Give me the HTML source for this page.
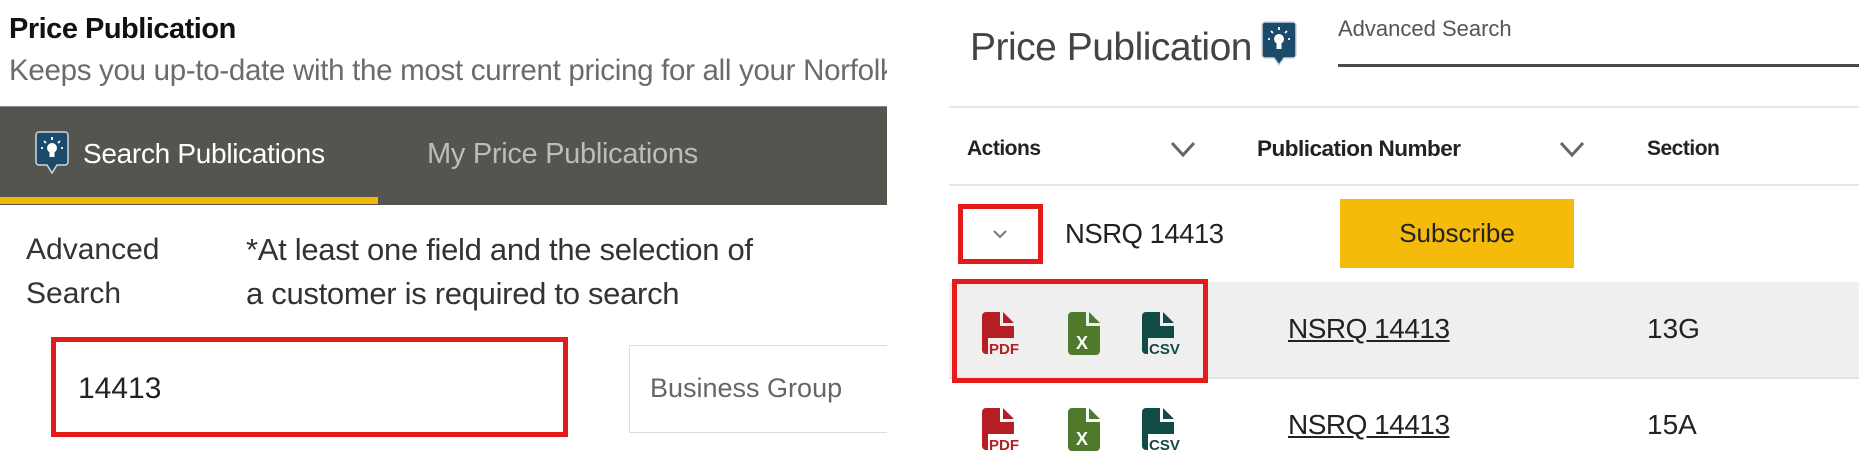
<!DOCTYPE html>
<html><head><meta charset="utf-8"><style>
*{margin:0;padding:0;box-sizing:border-box}
body{width:1859px;height:470px;overflow:hidden;background:#fff;font-family:"Liberation Sans",sans-serif;position:relative;color:#222}
.a{position:absolute;white-space:nowrap}
.ico{position:absolute}
</style></head><body>
<!-- LEFT -->
<div class="a" style="left:9px;top:13px;font-size:29px;font-weight:bold;color:#111;letter-spacing:-0.5px">Price Publication</div>
<div class="a" style="left:9px;top:54px;font-size:29.5px;color:#6b6b6b;width:878px;overflow:hidden;letter-spacing:-0.3px">Keeps you up-to-date with the most current pricing for all your Norfolk</div>
<div class="a" style="left:0;top:106px;width:887px;height:99px;background:#55554f;border-top:1px solid #888"></div>
<div class="a" style="left:0;top:197px;width:378px;height:7px;background:#f2b705"></div>
<svg class="ico" style="left:35px;top:131px" width="34" height="48" viewBox="0 0 34 48">
<path d="M4 1h26a3 3 0 0 1 3 3v27a3 3 0 0 1-3 3h-8l-5 8-5-8h-8a3 3 0 0 1-3-3v-27a3 3 0 0 1 3-3z" fill="#1b4a6b" stroke="#cfd8de" stroke-width="1.5"/>
<circle cx="17" cy="17" r="5" fill="#fff"/><rect x="14.5" y="21" width="5" height="5" fill="#fff"/>
<path d="M17 6v3M9 10l2 2M25 10l-2 2M6 17h2M26 17h2" stroke="#fff" stroke-width="1.8"/>
</svg>
<div class="a" style="left:83px;top:138px;font-size:28px;color:#fff;letter-spacing:-0.3px">Search Publications</div>
<div class="a" style="left:427px;top:138px;font-size:29px;color:#bdbdb8;letter-spacing:-0.3px">My Price Publications</div>
<div class="a" style="left:26px;top:228px;font-size:30px;color:#333;line-height:44px">Advanced<br>Search</div>
<div class="a" style="left:246px;top:228px;font-size:31px;color:#333;line-height:44px;letter-spacing:-0.3px">*At least one field and the selection of<br>a customer is required to search</div>
<div class="a" style="left:51px;top:337px;width:517px;height:100px;border:5px solid #e31b1b"></div>
<div class="a" style="left:78px;top:372px;font-size:30px;color:#222">14413</div>
<div class="a" style="left:629px;top:345px;width:258px;height:88px;border:1.5px solid #ddd;border-right:none"></div>
<div class="a" style="left:650px;top:373px;font-size:27px;color:#666">Business Group</div>

<!-- RIGHT -->
<div class="a" style="left:970px;top:26px;font-size:39px;color:#444;letter-spacing:-0.5px">Price Publication</div>
<svg class="ico" style="left:1261px;top:21px" width="36" height="48" viewBox="0 0 36 48">
<path d="M4 1h28a3 3 0 0 1 3 3v30a3 3 0 0 1-3 3h-9l-5 7-5-7h-9a3 3 0 0 1-3-3v-30a3 3 0 0 1 3-3z" fill="#1b4a6b" stroke="#cfd8de" stroke-width="1.5"/>
<circle cx="18" cy="18" r="5" fill="#fff"/><rect x="15.5" y="22" width="5" height="6" fill="#fff"/>
<path d="M18 6v3M10 10l2 2M26 10l-2 2M7 18h2M27 18h2" stroke="#fff" stroke-width="1.8"/>
</svg>
<div class="a" style="left:1338px;top:16px;font-size:22px;color:#555">Advanced Search</div>
<div class="a" style="left:1338px;top:64px;width:521px;height:3px;background:#4a4a48"></div>
<div class="a" style="left:949px;top:106px;width:910px;height:2px;background:#e6e6e6"></div>
<div class="a" style="left:967px;top:137px;font-size:21px;font-weight:bold;color:#222;letter-spacing:-0.5px">Actions</div>
<svg class="ico" style="left:1170px;top:140px" width="26" height="18"><path d="M2 3l11 12 11-12" stroke="#666" stroke-width="3" fill="none"/></svg>
<div class="a" style="left:1257px;top:136px;font-size:22.5px;font-weight:bold;color:#222;letter-spacing:-0.5px">Publication Number</div>
<svg class="ico" style="left:1559px;top:140px" width="26" height="18"><path d="M2 3l11 12 11-12" stroke="#666" stroke-width="3" fill="none"/></svg>
<div class="a" style="left:1647px;top:137px;font-size:21px;font-weight:bold;color:#222;letter-spacing:-0.5px">Section</div>
<div class="a" style="left:949px;top:184px;width:910px;height:2px;background:#e6e6e6"></div>

<div class="a" style="left:958px;top:204px;width:85px;height:60px;border:5px solid #e31b1b"></div>
<svg class="ico" style="left:992px;top:229px" width="16" height="10"><path d="M2 2l6 6 6-6" stroke="#777" stroke-width="2" fill="none"/></svg>
<div class="a" style="left:1065px;top:218px;font-size:27.5px;color:#222;letter-spacing:-0.5px">NSRQ 14413</div>
<div class="a" style="left:1340px;top:199px;width:234px;height:69px;background:#f5bb0a;font-size:26px;color:#222;text-align:center;line-height:69px">Subscribe</div>

<div class="a" style="left:949px;top:282px;width:910px;height:96px;background:#efefef"></div>
<div class="a" style="left:949px;top:377px;width:910px;height:2px;background:#e3e3e3"></div>
<div class="a" style="left:952px;top:279px;width:256px;height:104px;border:5px solid #e31b1b"></div>

<div class="a" style="left:1288px;top:313px;font-size:28px;color:#222;text-decoration:underline;letter-spacing:-0.5px">NSRQ 14413</div>
<div class="a" style="left:1647px;top:313px;font-size:28px;color:#222">13G</div>
<div class="a" style="left:1288px;top:409px;font-size:28px;color:#222;text-decoration:underline;letter-spacing:-0.5px">NSRQ 14413</div>
<div class="a" style="left:1647px;top:409px;font-size:28px;color:#222">15A</div>

<!-- icon rows -->
<svg class="ico" style="left:980px;top:311px" width="240" height="45" viewBox="0 0 240 45">
<g><path d="M6 1h14v14h14v28h-28a4 4 0 0 1-4-4v-34a4 4 0 0 1 4-4z" fill="#b51f24"/><path d="M23 1l11 11h-11z" fill="#b51f24"/><rect x="8" y="27" width="40" height="18" fill="#efefef"/><text x="9" y="43" font-family="Liberation Sans" font-weight="bold" font-size="15" fill="#b51f24">PDF</text></g>
<g transform="translate(86,0)"><path d="M6 1h14v14h14v25a4 4 0 0 1-4 4h-24a4 4 0 0 1-4-4v-35a4 4 0 0 1 4-4z" fill="#4f7a2c"/><path d="M23 1l11 11h-11z" fill="#4f7a2c"/><text x="10" y="38" font-family="Liberation Sans" font-weight="bold" font-size="18" fill="#fff">X</text></g>
<g transform="translate(160,0)"><path d="M6 1h14v14h14v28h-28a4 4 0 0 1-4-4v-34a4 4 0 0 1 4-4z" fill="#124a45"/><path d="M23 1l11 11h-11z" fill="#124a45"/><rect x="8" y="27" width="40" height="18" fill="#efefef"/><text x="9" y="43" font-family="Liberation Sans" font-weight="bold" font-size="15" fill="#124a45">CSV</text></g>
</svg>
<svg class="ico" style="left:980px;top:407px" width="240" height="45" viewBox="0 0 240 45">
<g><path d="M6 1h14v14h14v28h-28a4 4 0 0 1-4-4v-34a4 4 0 0 1 4-4z" fill="#b51f24"/><path d="M23 1l11 11h-11z" fill="#b51f24"/><rect x="8" y="27" width="40" height="18" fill="#fff"/><text x="9" y="43" font-family="Liberation Sans" font-weight="bold" font-size="15" fill="#b51f24">PDF</text></g>
<g transform="translate(86,0)"><path d="M6 1h14v14h14v25a4 4 0 0 1-4 4h-24a4 4 0 0 1-4-4v-35a4 4 0 0 1 4-4z" fill="#4f7a2c"/><path d="M23 1l11 11h-11z" fill="#4f7a2c"/><text x="10" y="38" font-family="Liberation Sans" font-weight="bold" font-size="18" fill="#fff">X</text></g>
<g transform="translate(160,0)"><path d="M6 1h14v14h14v28h-28a4 4 0 0 1-4-4v-34a4 4 0 0 1 4-4z" fill="#124a45"/><path d="M23 1l11 11h-11z" fill="#124a45"/><rect x="8" y="27" width="40" height="18" fill="#fff"/><text x="9" y="43" font-family="Liberation Sans" font-weight="bold" font-size="15" fill="#124a45">CSV</text></g>
</svg>
</body></html>
